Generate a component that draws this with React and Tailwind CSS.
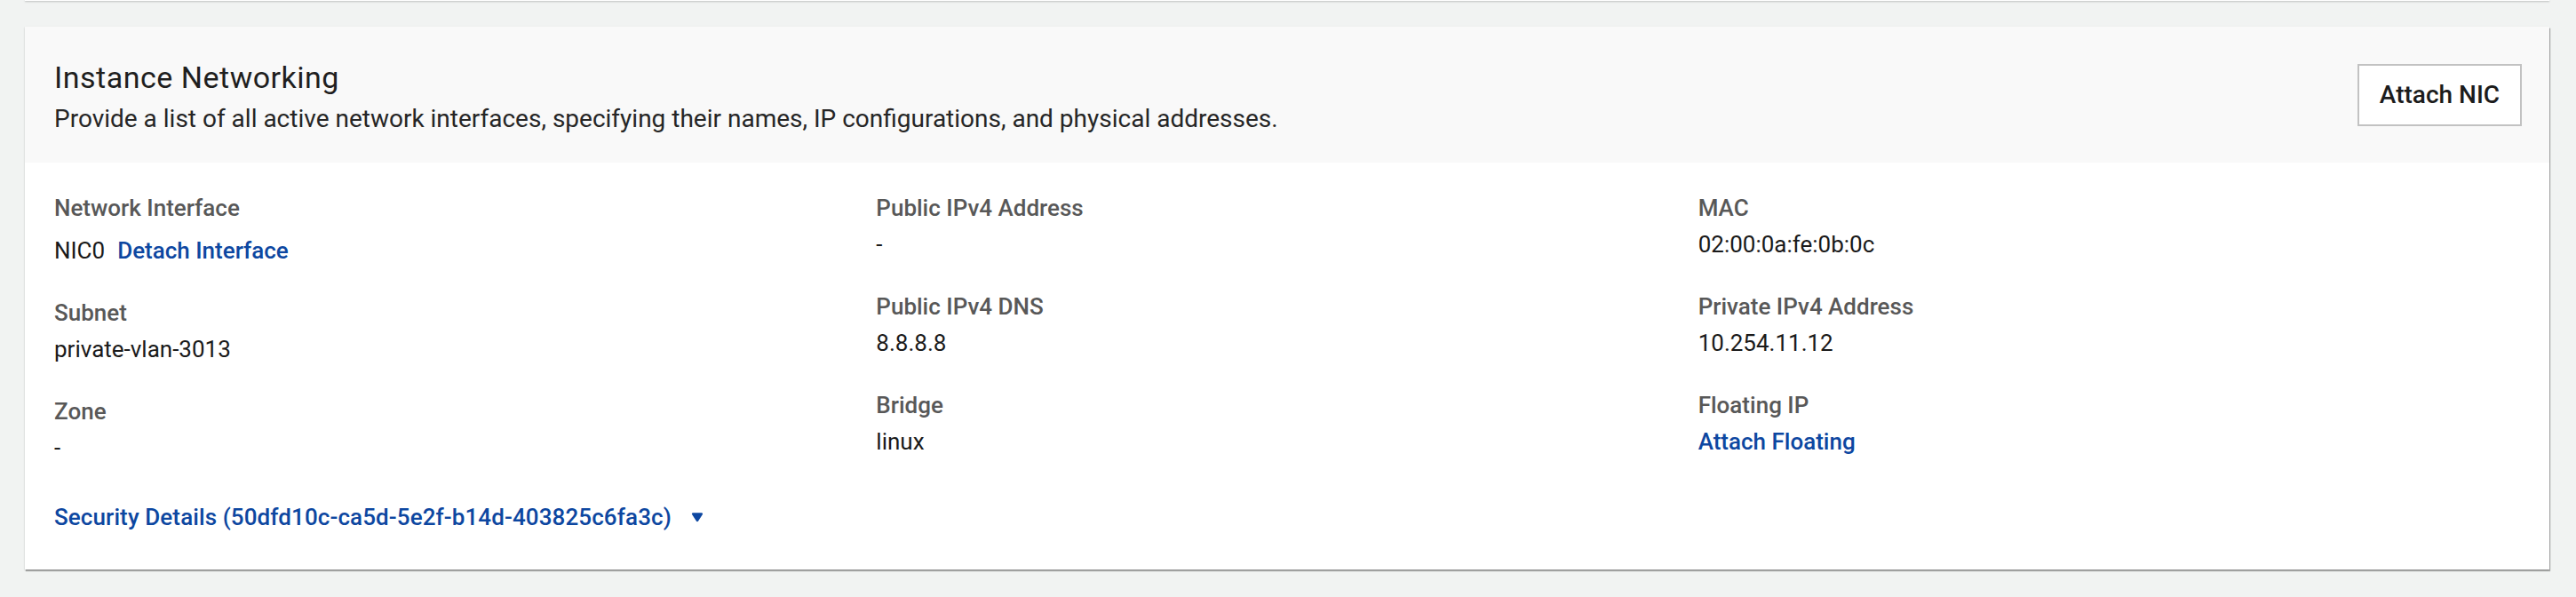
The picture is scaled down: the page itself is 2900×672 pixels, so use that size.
import React from 'react';

const Field = ({ label, children, valueClass = 'mt-[4px]' }) => (
  <div>
    <div className="text-[26px] leading-[37px] font-medium text-[#585858]">{label}</div>
    <div className={`text-[26px] leading-[37px] text-[#1a1a1a] ${valueClass}`}>{children}</div>
  </div>
);

const Link = ({ children }) => (
  <a href="#" className="font-medium text-[#0d47a1] hover:underline">{children}</a>
);

const CaretDown = () => (
  <svg width="14" height="11" viewBox="0 0 14 11" className="shrink-0">
    <path d="M1.2 2.2C0.5 1.1 1 0.2 2.3 0.2H11.7C13 0.2 13.5 1.1 12.8 2.2L8.1 9.6C7.6 10.4 6.4 10.4 5.9 9.6Z" fill="#0d47a1" />
  </svg>
);

export default function App() {
  return (
    <div
      className="w-[2900px] h-[672px] bg-[#f1f3f2] pl-[28px] pr-[30px]"
      style={{ fontFamily: 'Roboto, "Noto Sans", sans-serif' }}
    >
      {/* bottom edge of the card above */}
      <div className="h-[1px] bg-white shadow-[0_1px_2px_rgba(0,0,0,0.3)]" />

      <div className="mt-[29px] bg-white shadow-[0_1px_2px_rgba(0,0,0,0.2),1px_2px_1px_rgba(0,0,0,0.28)]">
        {/* Header */}
        <div className="h-[153px] bg-[#f9f9f9] px-[33px] flex items-center justify-between">
          <div className="pt-[6px]">
            <h2 className="text-[34px] leading-[40px] font-normal tracking-[0.5px] text-[#1f1f1f]">
              Instance Networking
            </h2>
            <p className="mt-[8px] text-[28px] leading-[37px] text-[#262626]">
              Provide a list of all active network interfaces, specifying their names, IP configurations, and physical addresses.
            </p>
          </div>
          <button className="w-[185px] h-[70px] mr-[-2px] border-2 border-[#c2c2c2] bg-white text-[28px] font-medium text-[#1c1c1c] flex items-center justify-center">
            Attach NIC
          </button>
        </div>

        {/* Body */}
        <div className="px-[33px] pt-[33px] pb-[40px]">
          <div className="grid grid-cols-3">
            <div className="flex flex-col gap-[33px]">
              <Field label="Network Interface" valueClass="mt-[11px]">
                <span>NIC0</span>
                <span className="ml-[14px]"><Link>Detach Interface</Link></span>
              </Field>
              <Field label="Subnet">private-vlan-3013</Field>
              <Field label="Zone">-</Field>
            </div>
            <div className="flex flex-col gap-[33px]">
              <Field label="Public IPv4 Address">-</Field>
              <Field label="Public IPv4 DNS">8.8.8.8</Field>
              <Field label="Bridge">linux</Field>
            </div>
            <div className="flex flex-col gap-[33px]">
              <Field label="MAC">02:00:0a:fe:0b:0c</Field>
              <Field label="Private IPv4 Address">10.254.11.12</Field>
              <Field label="Floating IP">
                <Link>Attach Floating</Link>
              </Field>
            </div>
          </div>

          <button className="mt-[41px] flex items-center gap-[22px] text-[26px] leading-[37px] font-medium tracking-[0.1px] text-[#0d47a1]">
            <span>Security Details (50dfd10c-ca5d-5e2f-b14d-403825c6fa3c)</span>
            <CaretDown />
          </button>
        </div>
      </div>
    </div>
  );
}
